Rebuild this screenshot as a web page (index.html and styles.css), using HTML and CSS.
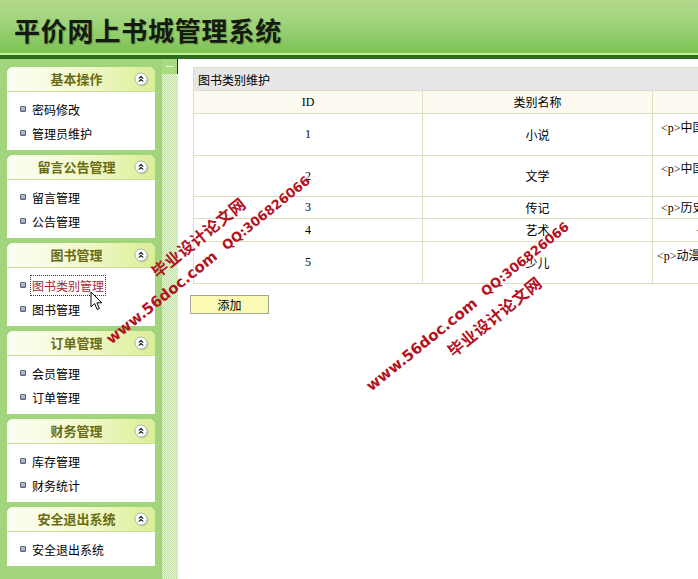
FILE: index.html
```html
<!DOCTYPE html>
<html lang="zh-CN">
<head>
<meta charset="utf-8">
<title>平价网上书城管理系统</title>
<link rel="stylesheet" href="styles.css">
</head>
<body>
<div class="header"><h1 class="title">平价网上书城管理系统</h1></div>
<div class="hline"></div>
<div class="hdark"></div>
<div class="main">
  <div class="sidebar">
    <div class="panel">
      <div class="phead"><span class="ptitle">基本操作</span><svg class="pico" viewBox="0 0 14 14" width="14" height="14"><circle cx="7" cy="7" r="6" fill="#fff" stroke="#b5b5b5"/><path d="M4.7 6.6 L7 4.3 L9.3 6.6 M4.7 9.6 L7 7.3 L9.3 9.6" fill="none" stroke="#333" stroke-width="1.1"/></svg></div>
      <ul class="pbody"><li class="item"><i class="dot"></i>密码修改</li><li class="item"><i class="dot"></i>管理员维护</li></ul>
    </div>
    <div class="panel">
      <div class="phead"><span class="ptitle">留言公告管理</span><svg class="pico" viewBox="0 0 14 14" width="14" height="14"><circle cx="7" cy="7" r="6" fill="#fff" stroke="#b5b5b5"/><path d="M4.7 6.6 L7 4.3 L9.3 6.6 M4.7 9.6 L7 7.3 L9.3 9.6" fill="none" stroke="#333" stroke-width="1.1"/></svg></div>
      <ul class="pbody"><li class="item"><i class="dot"></i>留言管理</li><li class="item"><i class="dot"></i>公告管理</li></ul>
    </div>
    <div class="panel">
      <div class="phead"><span class="ptitle">图书管理</span><svg class="pico" viewBox="0 0 14 14" width="14" height="14"><circle cx="7" cy="7" r="6" fill="#fff" stroke="#b5b5b5"/><path d="M4.7 6.6 L7 4.3 L9.3 6.6 M4.7 9.6 L7 7.3 L9.3 9.6" fill="none" stroke="#333" stroke-width="1.1"/></svg></div>
      <ul class="pbody"><li class="item"><i class="dot"></i><span class="active">图书类别管理</span></li><li class="item"><i class="dot"></i>图书管理</li></ul>
    </div>
    <div class="panel">
      <div class="phead"><span class="ptitle">订单管理</span><svg class="pico" viewBox="0 0 14 14" width="14" height="14"><circle cx="7" cy="7" r="6" fill="#fff" stroke="#b5b5b5"/><path d="M4.7 6.6 L7 4.3 L9.3 6.6 M4.7 9.6 L7 7.3 L9.3 9.6" fill="none" stroke="#333" stroke-width="1.1"/></svg></div>
      <ul class="pbody"><li class="item"><i class="dot"></i>会员管理</li><li class="item"><i class="dot"></i>订单管理</li></ul>
    </div>
    <div class="panel">
      <div class="phead"><span class="ptitle">财务管理</span><svg class="pico" viewBox="0 0 14 14" width="14" height="14"><circle cx="7" cy="7" r="6" fill="#fff" stroke="#b5b5b5"/><path d="M4.7 6.6 L7 4.3 L9.3 6.6 M4.7 9.6 L7 7.3 L9.3 9.6" fill="none" stroke="#333" stroke-width="1.1"/></svg></div>
      <ul class="pbody"><li class="item"><i class="dot"></i>库存管理</li><li class="item"><i class="dot"></i>财务统计</li></ul>
    </div>
    <div class="panel">
      <div class="phead"><span class="ptitle">安全退出系统</span><svg class="pico" viewBox="0 0 14 14" width="14" height="14"><circle cx="7" cy="7" r="6" fill="#fff" stroke="#b5b5b5"/><path d="M4.7 6.6 L7 4.3 L9.3 6.6 M4.7 9.6 L7 7.3 L9.3 9.6" fill="none" stroke="#333" stroke-width="1.1"/></svg></div>
      <ul class="pbody"><li class="item"><i class="dot"></i>安全退出系统</li></ul>
    </div>
  </div>
  <div class="splitter"><div class="sbtn"><span class="sdash"></span></div></div>
  <div class="content">
    <table class="grid">
      <colgroup><col class="c1"><col class="c2"><col class="c3"></colgroup>
      <tr class="caption"><td colspan="3">图书类别维护</td></tr>
      <tr class="thead"><td>ID</td><td>类别名称</td><td></td></tr>
      <tr class="tall"><td>1</td><td>小说</td><td class="desc">&lt;p&gt;中国古典小说与现代小说<br>&nbsp;</td></tr>
      <tr class="tall2"><td>2</td><td>文学</td><td class="desc">&lt;p&gt;中国文学经典作品<br>&nbsp;</td></tr>
      <tr class="short"><td>3</td><td>传记</td><td class="desc">&lt;p&gt;历史人物传记&lt;/p&gt;</td></tr>
      <tr class="short2"><td>4</td><td>艺术</td><td class="desc far">-</td></tr>
      <tr class="tall3"><td>5</td><td>少儿</td><td class="desc near">&lt;p&gt;动漫绘本少儿读物<br>&nbsp;</td></tr>
    </table>
    <button class="addbtn" type="button">添加</button>
  </div>
</div>

<svg class="cursor" viewBox="0 0 13 20" width="13" height="20"><path d="M1 1 L1 16 L4.6 12.6 L7.2 18.5 L9.4 17.5 L6.9 11.8 L11.8 11.8 Z" fill="#fff" stroke="#000" stroke-width="1" stroke-linejoin="miter"/></svg>

<span class="wm wm-cn wm1">毕业设计论文网</span>
<span class="wm wm-qq wm2">QQ:306826066</span>
<span class="wm wm-url wm3">www.56doc.com</span>
<span class="wm wm-qq wm4">QQ:306826066</span>
<span class="wm wm-url wm5">www.56doc.com</span>
<span class="wm wm-cn wm6">毕业设计论文网</span>
</body>
</html>
```
FILE: styles.css
```css
html, body {
  margin: 0;
  padding: 0;
}
body {
  width: 698px;
  height: 579px;
  overflow: hidden;
  position: relative;
  background: #fff;
  font-family: "Noto Sans CJK SC", sans-serif;
  font-size: 12px;
  color: #000;
}
.header {
  height: 53px;
  background: linear-gradient(to bottom, #b2d98c 0%, #9ed37a 45%, #7cc252 100%);
  display: flex;
  align-items: center;
  padding-left: 14px;
}
.title {
  margin: 6px 0 0 0;
  font-family: "Noto Sans CJK SC", sans-serif;
  font-size: 26px;
  font-weight: 700;
  letter-spacing: 0.8px;
  color: #141a10;
  text-shadow: 1px 1px 1px rgba(40, 70, 20, 0.35);
  line-height: 30px;
}
.hline {
  height: 2px;
  background: #bff09c;
}
.hdark {
  height: 4px;
  background: #2d6a1a;
}
.main {
  display: flex;
  height: 520px;
}
.sidebar {
  width: 148px;
  padding: 8px 7px 0 7px;
  background: #a1d47b;
}
.panel {
  background: #fff;
  border-radius: 6px 6px 0 0;
  margin-bottom: 5px;
  overflow: hidden;
}
.phead {
  height: 24px;
  border-bottom: 1px solid #c9dd9d;
  background: linear-gradient(to right, #fbfdf2 0%, #f6fbdc 35%, #e9f5b8 70%, #d9ee95 100%);
  display: flex;
  align-items: center;
  padding: 0 7px 0 12px;
}
.ptitle {
  flex: 1;
  text-align: center;
  font-size: 13px;
  font-weight: 700;
  color: #6b6c12;
  line-height: 24px;
}
.pico {
  display: block;
  flex: none;
  filter: drop-shadow(1px 1px 0 rgba(0,0,0,0.15));
}
.pbody {
  list-style: none;
  margin: 0;
  padding: 5px 0 5px 0;
}
.item {
  height: 24px;
  display: flex;
  align-items: center;
  padding-left: 13px;
  font-size: 12px;
  color: #000;
}
.dot {
  display: block;
  width: 4px;
  height: 4px;
  border: 1px solid #566079;
  border-radius: 1px;
  background: linear-gradient(#c4cce0, #8e9abb);
  margin-right: 6px;
}
.active {
  color: #a8283a;
  outline: 1px dotted #333;
  outline-offset: 1px;
}
.splitter {
  width: 16px;
  background: repeating-conic-gradient(#bfe29e 0 25%, #e7f5da 0 50%) 0 0 / 2px 2px;
}
.sbtn {
  width: 15px;
  height: 15px;
  background: #a8db80;
  border-right: 1px solid #2a2a2a;
  display: flex;
  align-items: center;
  justify-content: center;
}
.sdash {
  display: block;
  width: 7px;
  height: 1px;
  background: #f4fbe8;
}
.content {
  flex: 1;
  padding: 8px 0 0 15px;
  overflow: hidden;
  background: #fff;
}
.grid {
  border-collapse: collapse;
  width: 760px;
  table-layout: fixed;
  font-family: "Liberation Serif", "Noto Sans CJK SC", serif;
  font-size: 12px;
}
.c1 { width: 229px; }
.c2 { width: 230px; }
.c3 { width: 301px; }
.grid td {
  border: 1px solid #dedcc3;
  padding: 0;
  text-align: center;
  vertical-align: middle;
  white-space: nowrap;
  overflow: hidden;
}
.caption td {
  height: 22px;
  background: #e7e7e7;
  text-align: left;
  padding-left: 4px;
  font-family: "Noto Sans CJK SC", sans-serif;
}
.thead td {
  height: 22px;
  background: #fdfaf1;
}
.tall td { height: 41px; }
.tall2 td { height: 40px; }
.short td { height: 21px; }
.short2 td { height: 22px; }
.tall3 td { height: 41px; }
.grid .desc {
  text-align: left;
  padding-left: 8px;
  line-height: 14px;
}
.grid .far { padding-left: 44px; }
.grid .near { padding-left: 4px; }
.addbtn {
  display: block;
  margin: 11px 0 0 -3px;
  width: 79px;
  height: 19px;
  padding: 0;
  background: #fafab5;
  border: 1px solid #a6a696;
  font-family: "Noto Sans CJK SC", sans-serif;
  font-size: 12px;
  line-height: 16px;
  color: #000;
}
.cursor {
  position: absolute;
  left: 90px;
  top: 291px;
}
.wm {
  position: absolute;
  white-space: nowrap;
  color: #b3131f;
  font-weight: 700;
  transform: translate(-50%, -50%) rotate(-39deg);
  line-height: 1;
}
.wm-cn {
  font-family: "Noto Sans CJK SC", sans-serif;
  font-size: 16px;
  letter-spacing: 0.5px;
}
.wm-qq {
  font-family: "DejaVu Sans", sans-serif;
  font-size: 13px;
}
.wm-url {
  font-family: "DejaVu Sans", sans-serif;
  font-size: 15px;
}
.wm1 { left: 198px; top: 237px; }
.wm2 { left: 266px; top: 213px; }
.wm3 { left: 162px; top: 298px; }
.wm4 { left: 525px; top: 259px; }
.wm5 { left: 422px; top: 345px; }
.wm6 { left: 494px; top: 316px; }
```
